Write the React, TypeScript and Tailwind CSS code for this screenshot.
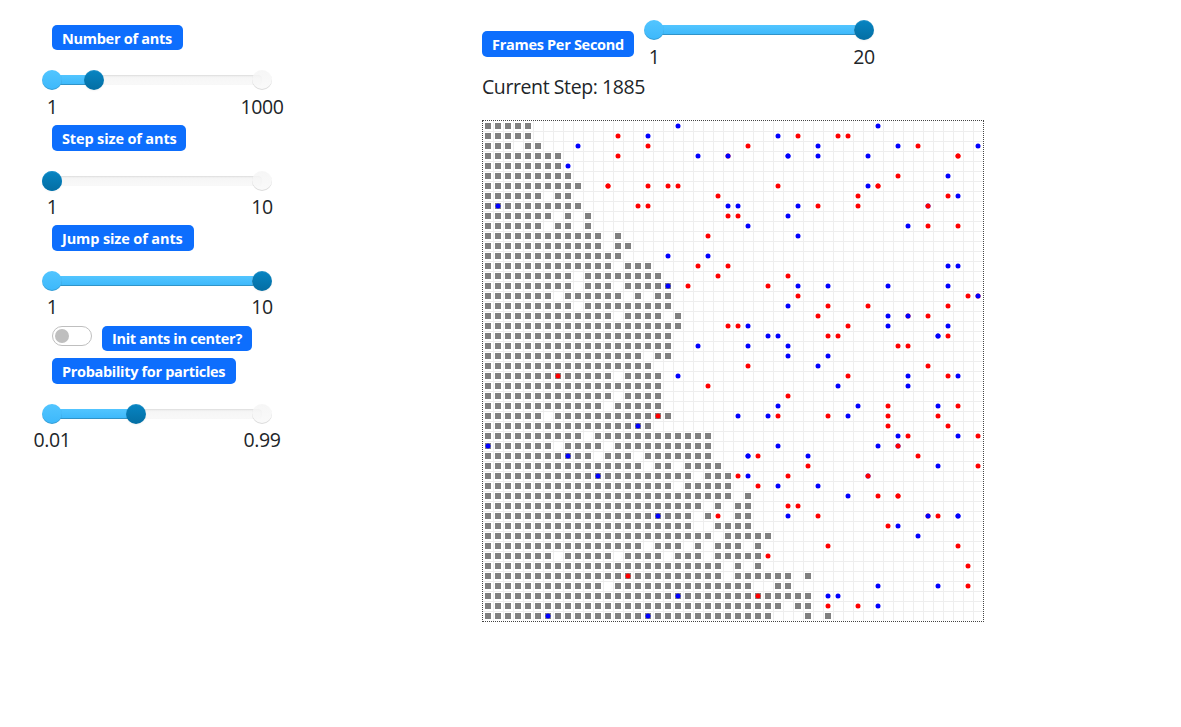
type Span = [number, number];

const CELL = 10;

const particles: Span[][] = [
  [[0, 4]],
  [[0, 4]],
  [[0, 2], [4, 5]],
  [[0, 7]],
  [[0, 7]],
  [[0, 8]],
  [[0, 9]],
  [[0, 5], [7, 8]],
  [[0, 9]],
  [[0, 6], [8, 8], [10, 10]],
  [[0, 5], [7, 8], [10, 10]],
  [[0, 11], [13, 13]],
  [[0, 11], [13, 14]],
  [[0, 13]],
  [[0, 12], [14, 16]],
  [[0, 8], [10, 17]],
  [[0, 8], [10, 12], [14, 18]],
  [[0, 6], [8, 13], [15, 15], [17, 18]],
  [[0, 8], [10, 18]],
  [[0, 12], [14, 17], [19, 19]],
  [[0, 19]],
  [[0, 18]],
  [[0, 18]],
  [[0, 15], [17, 18]],
  [[0, 16]],
  [[0, 12], [14, 17]],
  [[0, 17]],
  [[0, 12], [14, 17]],
  [[0, 11], [13, 17]],
  [[0, 5], [7, 18]],
  [[0, 16]],
  [[0, 9], [11, 22]],
  [[0, 6], [8, 11], [13, 22]],
  [[0, 10], [12, 14], [16, 22]],
  [[0, 15], [17, 18], [20, 23]],
  [[0, 20], [22, 24]],
  [[0, 18], [20, 24]],
  [[0, 24], [26, 26]],
  [[0, 21], [23, 23], [25, 26]],
  [[0, 20], [22, 22], [25, 26]],
  [[0, 20], [23, 26]],
  [[0, 22], [24, 28]],
  [[0, 15], [17, 19], [21, 21], [23, 25], [27, 27]],
  [[0, 6], [8, 12], [14, 17], [19, 21], [23, 27]],
  [[0, 23], [25, 25], [27, 27]],
  [[0, 23], [25, 30], [32, 32]],
  [[0, 11], [13, 26], [29, 30]],
  [[0, 32]],
  [[0, 29], [31, 32]],
  [[0, 28], [32, 32], [34, 34]],
];

// One entry per grid row; B = searching ant, R = carrying ant, number = column.
const ants: string[] = [
  "B19 B39",
  "R13 B16 B29 R31 R35 R36",
  "B9 R16 R26 B33 B41 R43 B49",
  "R13 B21 R24 B24 B30 B30 B33 B38 R47 R47",
  "B8",
  "R41 B46",
  "R12 R12 R16 R18 R19 R29 B38 R39 R39",
  "R23 R37 R46 B47",
  "B1 R15 R16 B24 B25 B31 R33 R37 B44 R44",
  "R24 R25 B30",
  "B26 B42 R44 R47",
  "R22 B31",
  "",
  "B18 B22",
  "R21 R24 B46 B47",
  "R23 R30",
  "B18 R20 R28 B31 B34 B40 B46",
  "R31 R48 R49 B49",
  "B30 R34 R38 R46",
  "R33 B40 R42 B42 R44",
  "R24 R25 B26 R36 B40 B46",
  "B28 B29 R34 R35 B45 B45 R46",
  "B21 B26 B30 R41 R42",
  "B30 B34",
  "R26 B33 R44",
  "R7 B19 R36 B42 R46 B47",
  "R22 B35 B42",
  "R30",
  "B29 B37 R40 B45 R47",
  "R17 B25 B28 R29 R34 B36 R40 R45",
  "B15 R40 R46",
  "B41 R42 B47 R49",
  "B0 B29 B39 B41 R41",
  "B8 B26 B26 R27 B32 R43",
  "R32 B45 R49",
  "B11 R25 B26 R30 B38 R38",
  "R27 B29 B33",
  "B36 R39 R41 R41",
  "R30 R31",
  "B17 R23 B30 R33 R44 B44 R45 B47 B47",
  "R40 B41",
  "B43",
  "R34 R47",
  "R28",
  "R48",
  "R14",
  "B39 B45 R48",
  "B19 R27 B34 B35",
  "R34 R37 B39",
  "B6 B16",
];

function Badge({ text, className }: { text: string; className: string }) {
  return (
    <span
      className={`flex shrink-0 items-center whitespace-nowrap rounded-[5px] bg-[#0d6efd] pl-[10px] text-[14.5px] font-bold leading-none text-white ${className}`}
    >
      {text}
    </span>
  );
}

interface SliderProps {
  min: string;
  max: string;
  percent: number;
  labelClass?: string;
}

const lightKnob =
  "bg-linear-to-b from-[#52c5ff] to-[#3cb8fb] shadow-[inset_0_-1px_0_rgba(0,0,0,0.15)]";
const greyKnob =
  "bg-linear-to-b from-[#f5f5f5] to-[#f9f9f9] opacity-80 shadow-[inset_0_-1px_0_rgba(0,0,0,0.15)]";

function Slider({ min, max, percent, labelClass = "mt-px" }: SliderProps) {
  return (
    <div className="w-[210px]">
      <div className="relative flex h-5 items-center">
        <div className="h-[10px] w-full overflow-hidden rounded bg-linear-to-b from-[#f5f5f5] to-[#f9f9f9] shadow-[inset_0_1px_2px_rgba(0,0,0,0.1)]">
          <div
            className="h-full bg-linear-to-b from-[#52c5ff] to-[#3cb8fb] shadow-[inset_0_-1px_0_rgba(0,0,0,0.2)]"
            style={{ width: `${percent}%` }}
          />
        </div>
        <span className={`absolute -left-[10px] top-0 size-5 rounded-full ${lightKnob}`} />
        <span className={`absolute -right-[10px] top-0 size-5 rounded-full ${greyKnob}`} />
        <span
          className="absolute top-0 -ml-[10px] size-5 rounded-full bg-linear-to-b from-[#0785c3] to-[#046ea3] shadow-[inset_0_1px_0_rgba(255,255,255,0.1),0_1px_2px_rgba(0,0,0,0.05)]"
          style={{ left: `${percent}%` }}
        />
      </div>
      <div
        className={`flex h-[30px] justify-between text-[19.5px] leading-[30px] tracking-[-0.4px] ${labelClass}`}
      >
        <span className="flex w-0 justify-center">{min}</span>
        <span className="flex w-0 justify-center">{max}</span>
      </div>
    </div>
  );
}

function Grid() {
  const lines = Array.from({ length: 49 }, (_, i) => (i + 1) * CELL);
  return (
    <svg width="500" height="500" className="block">
      {lines.map((p) => (
        <g key={p} fill="#eeeeee">
          <rect x={p} y={0} width={1} height={500} />
          <rect x={0} y={p} width={500} height={1} />
        </g>
      ))}
      {particles.map((spans, row) =>
        spans.flatMap(([from, to]) =>
          Array.from({ length: to - from + 1 }, (_, i) => (
            <rect
              key={`${row}-${from + i}`}
              x={(from + i) * CELL + 2}
              y={row * CELL + 2}
              width={6}
              height={6}
              fill="#808080"
            />
          )),
        ),
      )}
      {ants.map((line, row) =>
        line
          .split(" ")
          .filter(Boolean)
          .map((ant, i) => (
            <circle
              key={`${row}-${i}`}
              cx={Number(ant.slice(1)) * CELL + 5}
              cy={row * CELL + 5}
              r={2.5}
              fill={ant[0] === "B" ? "#0000ff" : "#ff0000"}
            />
          )),
      )}
    </svg>
  );
}

export default function App() {
  return (
    <main className="flex h-[727px] w-[1181px] overflow-hidden bg-white pl-[52px] font-['Open_Sans','Noto_Sans',sans-serif] text-[#212529]">
      <section className="flex w-[430px] flex-col items-start pt-[25px]">
        <Badge text="Number of ants" className="h-[25px] w-[131px] pt-[3px] tracking-[-0.28px]" />
        <div className="mt-5 h-[55px]">
          <Slider min="1" max="1000" percent={20} labelClass="mt-[2px]" />
        </div>
        <Badge text="Step size of ants" className="h-[26px] w-[134px] pt-[3px] tracking-[-0.14px]" />
        <div className="mt-5 h-[54px]">
          <Slider min="1" max="10" percent={0} />
        </div>
        <Badge text="Jump size of ants" className="h-[26px] w-[142px] pt-[3px] tracking-[-0.12px]" />
        <div className="mt-5 h-[55px]">
          <Slider min="1" max="10" percent={100} />
        </div>
        <div className="flex items-start gap-[10px]">
          <span className="flex h-5 w-10 items-center rounded-full border border-[#bfbfbf] bg-white pl-[2px]">
            <span className="size-[14px] rounded-full bg-[#bfbfbf]" />
          </span>
          <Badge text="Init ants in center?" className="h-[25px] w-[150px] pt-[2px] tracking-[-0.3px]" />
        </div>
        <Badge
          text="Probability for particles"
          className="mt-[7px] h-[26px] w-[184px] pt-[3px] tracking-[-0.32px]"
        />
        <div className="mt-5">
          <Slider min="0.01" max="0.99" percent={40} />
        </div>
      </section>
      <section className="flex flex-col items-start pt-5">
        <div className="flex h-[52px] items-start">
          <Badge
            text="Frames Per Second"
            className="mr-5 mt-[11px] h-[26px] w-[152px] pt-[3px] tracking-[-0.29px]"
          />
          <Slider min="1" max="20" percent={100} labelClass="mt-[2px]" />
        </div>
        <p className="h-12 whitespace-nowrap text-[19.5px] leading-[30px] tracking-[-0.41px]">
          Current Step: 1885
        </p>
        <div className="border border-dotted border-[#444444]">
          <Grid />
        </div>
      </section>
    </main>
  );
}
